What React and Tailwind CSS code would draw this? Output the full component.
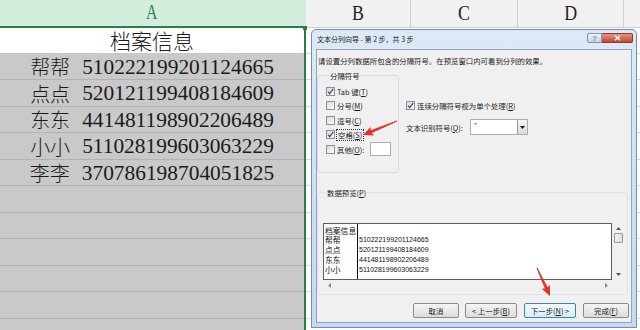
import React from 'react';

const rows = [
  ['帮帮', '510222199201124665'],
  ['点点', '520121199408184609'],
  ['东东', '441481198902206489'],
  ['小小', '511028199603063229'],
  ['李李', '370786198704051825'],
];

function Check({ checked }) {
  return (
    <span className="w-[9px] h-[9px] border border-[#8e8f8f] bg-linear-to-br from-[#d8d8d8] to-white flex items-center justify-center shrink-0">
      {checked && (
        <svg width="7" height="7" viewBox="0 0 7 7">
          <path d="M1 3.6 L2.7 5.6 L6.2 0.8" stroke="#3d4f86" strokeWidth="1.3" fill="none" />
        </svg>
      )}
    </span>
  );
}

function Arrow({ x1, y1, x2, y2 }) {
  const ang = (Math.atan2(y2 - y1, x2 - x1) * 180) / Math.PI;
  const L = Math.hypot(x2 - x1, y2 - y1);
  return (
    <g transform={`translate(${x2} ${y2}) rotate(${ang})`}>
      <polygon
        points={`${-L},-0.5 -9,-1.5 -10,-4.6 0,0 -10,4.6 -9,1.5 ${-L},0.5`}
        fill="#e8302a"
      />
    </g>
  );
}

function Btn({ children, focused }) {
  return (
    <div
      className={
        focused
          ? 'h-[15px] w-[52px] border border-[#3c7fb1] rounded-[2px] bg-linear-to-b from-[#f3f9fd] to-[#d7ecf9] flex items-center justify-center'
          : 'h-[15px] border border-[#8a8a8a] rounded-[2px] bg-linear-to-b from-[#f5f5f5] to-[#dcdcdc] flex items-center justify-center'
      }
    >
      {children}
    </div>
  );
}

export default function App() {
  const emptyRows = Array.from({ length: 6 });
  const rightRows = Array.from({ length: 12 });
  return (
    <div className="relative w-[640px] h-[330px] overflow-hidden bg-white font-['Liberation_Serif','Noto_Sans_CJK_SC',serif]">
      {/* header */}
      <div className="flex h-[27.5px]">
        <div className="w-[304px] h-full bg-[#d3eddc] border-b-2 border-[#2f7a4c] flex items-center justify-center text-[21px] text-[#2e7d4f]">
          <span className="inline-block scale-x-[0.75]">A</span>
        </div>
        <div className="w-[2px] h-full bg-[#d3eddc] border-b-2 border-[#2f7a4c]" />
        <div className="flex-1 flex h-full bg-[#f1f1f1] border-b border-[#cfcfcf] text-[21px] text-[#222]">
          <div className="w-[105px] border-r border-[#d2d2d2] flex items-center justify-center">
            <span className="inline-block scale-x-[0.85]">B</span>
          </div>
          <div className="w-[107px] border-r border-[#d2d2d2] flex items-center justify-center">
            <span className="inline-block scale-x-[0.85]">C</span>
          </div>
          <div className="w-[106px] border-r border-[#d2d2d2] flex items-center justify-center">
            <span className="inline-block scale-x-[0.85]">D</span>
          </div>
          <div className="flex-1" />
        </div>
      </div>

      {/* body */}
      <div className="flex">
        <div className="w-[304px] flex flex-col">
          <div className="h-[26px] border-b border-[#c8c8c8] flex items-center justify-center text-[21px] text-[#1a1a1a] font-['Noto_Sans_CJK_SC',sans-serif] font-light leading-none pt-[1px]">
            档案信息
          </div>
          {rows.map(([n, id]) => (
            <div
              key={n}
              className="h-[26.5px] bg-[#c9c9c9] border-b border-[#b3b3b3] flex items-center justify-center text-[#1a1a1a] leading-none pt-[2px]"
            >
              <span className="text-[20px] font-['Noto_Sans_CJK_SC',sans-serif] font-light mr-[12px]">{n}</span>
              <span className="text-[21.4px]">{id}</span>
            </div>
          ))}
          {emptyRows.map((_, i) => (
            <div key={i} className="h-[26.5px] bg-[#c9c9c9] border-b border-[#b3b3b3]" />
          ))}
        </div>
        <div className="w-[2px] bg-[#2f7a4c] relative">
          <div className="absolute -top-[2px] -left-[1px] w-[4px] h-[4px] bg-[#2f7a4c]" />
        </div>
        <div className="flex-1 flex flex-col">
          <div className="h-[26px] border-b border-[#dadada]" />
          {rightRows.map((_, i) => (
            <div key={i} className="h-[26.5px] border-b border-[#dadada]" />
          ))}
        </div>
      </div>

      {/* dialog */}
      <div className="absolute left-[311px] top-[29px] w-[326px] h-[299px] border border-[#6f8db3] rounded-t-[5px] bg-linear-to-b from-[#dde9f6] to-[#c6d9ee] flex flex-col font-['Noto_Sans_CJK_SC',sans-serif] text-[7.4px] text-[#1b1b1b] leading-[11px]">
        <div className="h-[19px] flex items-start">
          <span className="pl-[5px] pt-[4px] text-[7px]">文本分列向导 - 第 2 步，共 3 步</span>
          <div className="ml-auto mt-[3px] mr-[3px] flex">
            <div className="w-[15px] h-[10px] border border-[#7f93ad] rounded-l-[2px] bg-linear-to-b from-[#eef3f9] to-[#c5d3e4] flex items-center justify-center text-[7px] leading-none text-[#3b4e69] font-['Liberation_Sans',sans-serif]">
              ?
            </div>
            <div className="w-[31px] h-[10px] border border-[#8b3a32] border-l-0 rounded-r-[2px] bg-linear-to-b from-[#e69485] to-[#c44533] flex items-center justify-center">
              <svg width="7" height="6" viewBox="0 0 7 6">
                <path d="M1 0.8 L6 5.2 M6 0.8 L1 5.2" stroke="white" strokeWidth="1.5" />
              </svg>
            </div>
          </div>
        </div>

        <div className="flex-1 mx-[4px] mb-[4px] border border-[#8ea4bf] bg-[#f0f0f0] flex flex-col">
          <div className="mt-[5px] pl-[1px]">请设置分列数据所包含的分隔符号。在预览窗口内可看到分列的效果。</div>

          <div className="mt-[4px] flex items-start">
            <fieldset className="w-[82px] border border-[#d5dde4] rounded-[3px] pl-[8px] pt-[3px] pb-[15px]">
              <legend className="ml-[3px] px-[1px]">分隔符号</legend>
              <div className="h-[14.5px] flex items-center gap-[2px]">
                <Check checked />
                <span>Tab 键(<u>T</u>)</span>
              </div>
              <div className="h-[14.5px] flex items-center gap-[2px]">
                <Check />
                <span>分号(<u>M</u>)</span>
              </div>
              <div className="h-[14.5px] flex items-center gap-[2px]">
                <Check />
                <span>逗号(<u>C</u>)</span>
              </div>
              <div className="h-[14.5px] flex items-center gap-[1px]">
                <Check checked />
                <span className="border border-dotted border-[#333] px-[1px] leading-[10px]">空格(<u>S</u>)</span>
              </div>
              <div className="h-[14.5px] flex items-center gap-[2px]">
                <Check />
                <span>其他(<u>O</u>):</span>
                <span className="ml-[4px] w-[21px] h-[14px] border border-[#abadb3] bg-white" />
              </div>
            </fieldset>

            <div className="ml-[7px] flex flex-col">
              <div className="mt-[28px] h-[14px] flex items-center gap-[2px]">
                <Check checked />
                <span>连续分隔符号视为单个处理(<u>R</u>)</span>
              </div>
              <div className="mt-[7px] flex items-center">
                <span className="w-[64px]">文本识别符号(<u>Q</u>):</span>
                <div className="w-[58px] h-[16px] border border-[#abadb3] bg-white flex">
                  <span className="flex-1 pl-[3px] text-[8px] leading-[12px] font-['Liberation_Sans',sans-serif]">"</span>
                  <span className="w-[10px] h-full border-l border-[#9a9a9a] bg-linear-to-b from-[#f4f4f4] to-[#d9d9d9] flex items-center justify-center">
                    <svg width="5" height="3" viewBox="0 0 5 3">
                      <path d="M0 0 L5 0 L2.5 3 Z" fill="#111" />
                    </svg>
                  </span>
                </div>
              </div>
            </div>
          </div>

          <fieldset className="mt-[14px] mr-[3px] border border-[#e0e4e8] rounded-[3px] pl-[5px] pr-[2px] pt-[25px] pb-[3px]">
            <legend className="ml-[3px] px-[1px]">数据预览(<u>P</u>)</legend>
            <div className="h-[68px] flex flex-col">
              <div className="flex-1 flex">
                <div className="flex-1 border border-[#5e5e5e] bg-white flex">
                  <div className="w-[34px] border-r border-[#111] text-[7.8px] leading-[9.8px] pl-[1px] pt-[2px] text-[#111]">
                    <div>档案信息</div>
                    <div>帮帮</div>
                    <div>点点</div>
                    <div>东东</div>
                    <div>小小</div>
                  </div>
                  <div className="pl-[1px] pt-[2px] text-[7px] leading-[9.8px] font-['Liberation_Sans',sans-serif] text-[#111]">
                    <div>&nbsp;</div>
                    <div>510222199201124665</div>
                    <div>520121199408184609</div>
                    <div>441481198902206489</div>
                    <div>511028199603063229</div>
                  </div>
                </div>
                <div className="w-[13px] flex flex-col items-center">
                  <svg className="mt-[4px]" width="5" height="3" viewBox="0 0 5 3">
                    <path d="M0 3 L5 3 L2.5 0 Z" fill="#555" />
                  </svg>
                  <div className="mt-[3px] w-[9px] h-[10px] border border-[#9a9a9a] rounded-[1px] bg-linear-to-r from-[#f2f2f2] to-[#dcdcdc]" />
                  <div className="flex-1" />
                  <svg className="mb-[4px]" width="5" height="3" viewBox="0 0 5 3">
                    <path d="M0 0 L5 0 L2.5 3 Z" fill="#555" />
                  </svg>
                </div>
              </div>
              <div className="h-[11px] flex items-center justify-between pl-[5px] pr-[17px]">
                <svg width="3" height="5" viewBox="0 0 3 5">
                  <path d="M3 0 L3 5 L0 2.5 Z" fill="#8a8a8a" />
                </svg>
                <svg width="3" height="5" viewBox="0 0 3 5">
                  <path d="M0 0 L0 5 L3 2.5 Z" fill="#8a8a8a" />
                </svg>
              </div>
            </div>
          </fieldset>

          <div className="mt-[8px] flex justify-end gap-[7px] pr-[2px]">
            <div className="w-[46px]"><Btn>取消</Btn></div>
            <div className="w-[52px] -ml-[1px]"><Btn>&lt; 上一步(<u>B</u>)</Btn></div>
            <Btn focused>下一步(<u>N</u>) &gt;</Btn>
            <div className="w-[46px]"><Btn>完成(<u>F</u>)</Btn></div>
          </div>
        </div>
      </div>

      {/* annotation arrows */}
      <svg className="absolute left-0 top-0 pointer-events-none" width="640" height="330">
        <Arrow x1={397} y1={121} x2={363} y2={135} />
        <Arrow x1={537} y1={268} x2={550} y2={296} />
      </svg>
    </div>
  );
}
